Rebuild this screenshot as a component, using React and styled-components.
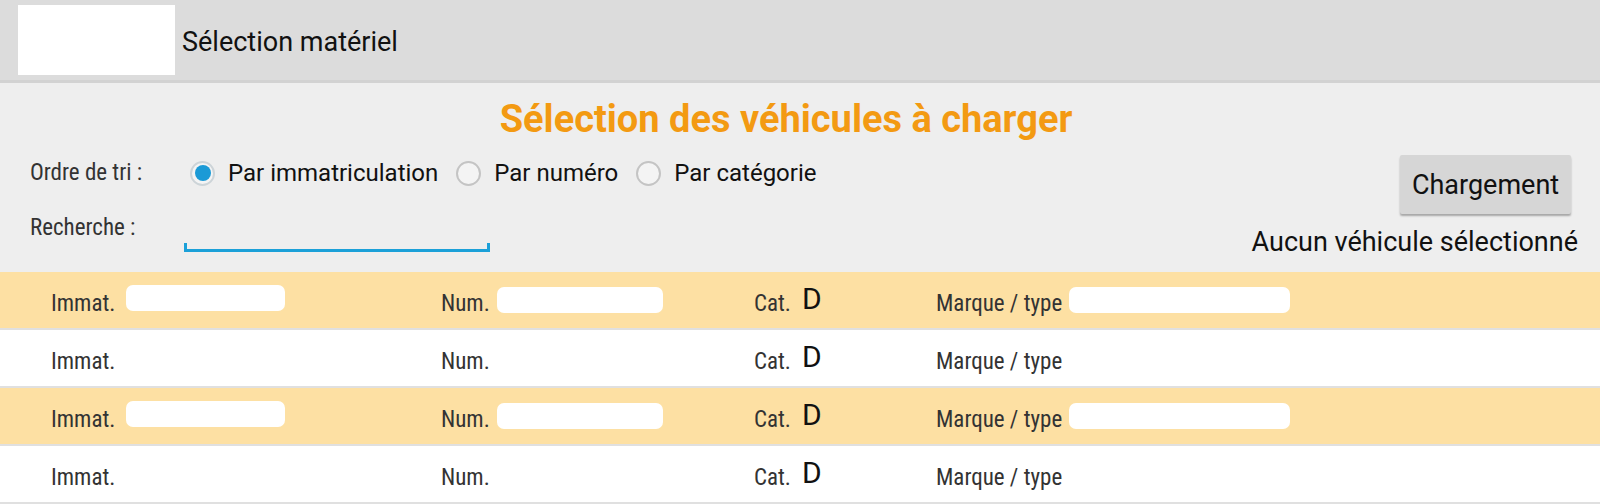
import React, { useState } from "react";
import styled, { createGlobalStyle } from "styled-components";

const GlobalStyle = createGlobalStyle`
  html, body {
    margin: 0;
    padding: 0;
    background: #eeeeee;
    font-family: Roboto, "Noto Sans", sans-serif;
    color: #111;
  }
`;

/// Barre du haut

const TopBar = styled.header`
  height: 80px;
  background: #dcdcdc;
  border-bottom: 3px solid #d2d2d2;
  display: flex;
  align-items: center;
  padding-left: 18px;
`;

const Logo = styled.div`
  width: 157px;
  height: 70px;
  background: #ffffff;
`;

const TopTitle = styled.span`
  font-size: 27px;
  margin-left: 7px;
  margin-top: 4px;
`;

/// Panneau de sélection

const Panel = styled.section`
  padding: 14px 22px 0 30px;
  height: 175px;
`;

const Title = styled.h1`
  margin: 0 0 10px;
  text-align: center;
  font-size: 38px;
  line-height: 44px;
  font-weight: 700;
  color: #f39a12;
  padding-right: 36px;
`;

const Controls = styled.div`
  display: flex;
  justify-content: space-between;
  align-items: flex-start;
`;

const Left = styled.div`
  display: grid;
  grid-template-columns: 154px auto;
  grid-template-rows: 44px 77px;
  align-items: start;
`;

const Small = styled.span`
  font-family: "Liberation Sans Narrow", "Roboto Condensed", Roboto, sans-serif;
  font-size: 23px;
  line-height: 28px;
  color: #333;
  margin-top: ${(p) => p.$offset}px;
`;

const Radios = styled.div`
  display: flex;
  align-items: center;
  height: 44px;
  margin-left: 6px;
`;

const RadioItem = styled.label`
  display: flex;
  align-items: center;
  font-size: 24px;
  margin-right: 18px;
  cursor: pointer;
`;

const Circle = styled.span`
  width: 25px;
  height: 25px;
  border-radius: 50%;
  box-sizing: border-box;
  border: 2px solid ${(p) => (p.$on ? "#cdd4d8" : "#c4c4c4")};
  background: #f4f4f4;
  margin-right: 13px;
  display: flex;
  align-items: center;
  justify-content: center;

  &::after {
    content: "";
    width: 16px;
    height: 16px;
    border-radius: 50%;
    background: ${(p) => (p.$on ? "#1b9ad6" : "transparent")};
  }
`;

const SearchInput = styled.input`
  width: 306px;
  height: 32px;
  box-sizing: border-box;
  margin-top: 25px;
  padding: 0 8px;
  border: none;
  background:
    linear-gradient(#1ba0d8, #1ba0d8) left bottom / 3px 9px no-repeat,
    linear-gradient(#1ba0d8, #1ba0d8) right bottom / 3px 9px no-repeat,
    linear-gradient(#1ba0d8, #1ba0d8) bottom / 100% 3px no-repeat;
  outline: none;
  font-family: Roboto, sans-serif;
  font-size: 20px;
`;

const Right = styled.div`
  display: flex;
  flex-direction: column;
  align-items: flex-end;
  margin-top: 4px;
`;

const Button = styled.button`
  width: 171px;
  height: 59px;
  margin-right: 7px;
  border: none;
  border-radius: 2px;
  background: #d6d6d6;
  box-shadow: 0 2px 2px rgba(0, 0, 0, 0.3);
  font-family: Roboto, sans-serif;
  font-size: 27px;
  color: #111;
  cursor: pointer;
`;

const Status = styled.div`
  font-size: 27px;
  line-height: 32px;
  margin-top: 12px;
`;

/// Liste des véhicules

const Row = styled.div`
  height: 56px;
  border-bottom: 2px solid #e0e0e0;
  background: ${(p) => (p.$odd ? "#fde0a3" : "#ffffff")};
  display: grid;
  grid-template-columns: 390px 313px 182px 1fr;
  align-items: center;
  padding-left: 51px;
`;

const Cell = styled.div`
  display: flex;
  align-items: center;
`;

const Label = styled.span`
  font-family: "Liberation Sans Narrow", "Roboto Condensed", Roboto, sans-serif;
  font-size: 23px;
  color: #333;
  margin-top: 6px;
`;

const Masked = styled.span`
  display: inline-block;
  width: ${(p) => p.$w}px;
  height: 26px;
  background: #ffffff;
  border-radius: 7px;
  margin-left: ${(p) => p.$gap}px;
  margin-top: ${(p) => (p.$up ? "-4px" : "0")};
`;

const Cat = styled.span`
  font-size: 30px;
  margin-left: 11px;
  margin-top: -4px;
`;

const vehicules = [
  { masked: true },
  { masked: false },
  { masked: true },
  { masked: false },
];

export default function App() {
  const [tri, setTri] = useState("immat");

  const options = [
    { id: "immat", label: "Par immatriculation" },
    { id: "num", label: "Par numéro" },
    { id: "cat", label: "Par catégorie" },
  ];

  return (
    <>
      <GlobalStyle />
      <TopBar>
        <Logo />
        <TopTitle>Sélection matériel</TopTitle>
      </TopBar>

      <Panel>
        <Title>Sélection des véhicules à charger</Title>
        <Controls>
          <Left>
            <Small $offset={8}>Ordre de tri :</Small>
            <Radios>
              {options.map((o) => (
                <RadioItem key={o.id} onClick={() => setTri(o.id)}>
                  <Circle $on={tri === o.id} />
                  {o.label}
                </RadioItem>
              ))}
            </Radios>
            <Small $offset={19}>Recherche :</Small>
            <SearchInput />
          </Left>
          <Right>
            <Button>Chargement</Button>
            <Status>Aucun véhicule sélectionné</Status>
          </Right>
        </Controls>
      </Panel>

      {vehicules.map((v, i) => (
        <Row key={i} $odd={i % 2 === 0}>
          <Cell>
            <Label>Immat.</Label>
            {v.masked && <Masked $w={159} $gap={11} $up />}
          </Cell>
          <Cell>
            <Label>Num.</Label>
            {v.masked && <Masked $w={166} $gap={7} />}
          </Cell>
          <Cell>
            <Label>Cat.</Label>
            <Cat>D</Cat>
          </Cell>
          <Cell>
            <Label>Marque / type</Label>
            {v.masked && <Masked $w={221} $gap={7} />}
          </Cell>
        </Row>
      ))}
    </>
  );
}
